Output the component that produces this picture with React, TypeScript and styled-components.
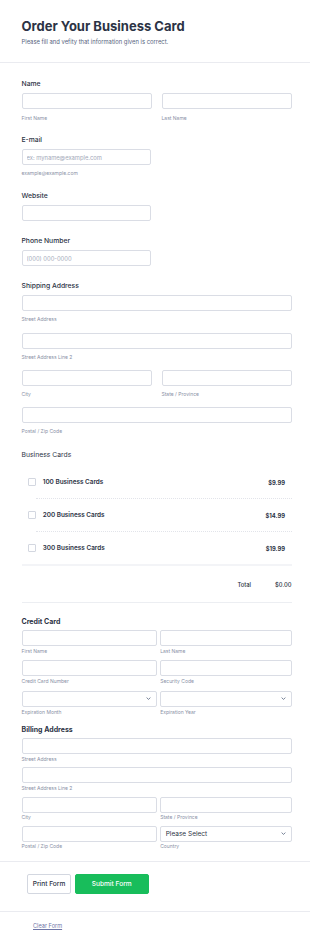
import React from 'react';
import styled, { createGlobalStyle } from 'styled-components';

const GlobalStyle = createGlobalStyle`
  html, body { margin: 0; padding: 0; background: #fff; }
  body { font-family: Inter, "Noto Sans", sans-serif; color: #2c3345; }
  * { box-sizing: border-box; }
`;

const Header = styled.header`
  padding: 17.5px 20px 16.5px 21.5px;
  border-bottom: 1px solid #eaebf0;
`;

const Title = styled.h1`
  margin: 0;
  font-size: 13px;
  line-height: 16px;
  font-weight: 700;
  color: #2c3345;
`;

const Subtitle = styled.p`
  margin: 4px 0 0;
  font-size: 5.85px;
  line-height: 8px;
  color: #57647e;
`;

const Body = styled.main`
  padding: 0 18.5px 0 21.5px;
`;

const Field = styled.section<{ $mt: number }>`
  margin-top: ${p => p.$mt}px;
`;

const Label = styled.div<{ $strong?: boolean; $light?: boolean }>`
  font-size: ${p => (p.$strong ? 7 : 6.8)}px;
  line-height: 9px;
  font-weight: ${p => (p.$strong ? 700 : p.$light ? 400 : 500)};
  color: #2c3345;
`;

const Grid = styled.div<{ $cols: string; $gap: number; $rowGap?: number; $mt: number }>`
  display: grid;
  grid-template-columns: ${p => p.$cols};
  column-gap: ${p => p.$gap}px;
  row-gap: ${p => p.$rowGap ?? 0}px;
  margin-top: ${p => p.$mt}px;
`;

const Input = styled.input`
  display: block;
  width: 100%;
  height: 16px;
  margin: 0;
  padding: 0 4px;
  border: 1px solid #dadde5;
  border-radius: 2px;
  background: #fff;
  font-family: inherit;
  font-size: 5.8px;
  color: #2c3345;
  outline: none;
  &::placeholder { color: #a3a9b9; }
`;

const SelectBox = styled.div`
  display: flex;
  align-items: center;
  justify-content: space-between;
  height: 16px;
  padding: 0 5px 0 4.5px;
  border: 1px solid #dadde5;
  border-radius: 2px;
  font-size: 6.5px;
  color: #2c3345;
`;

const Sub = styled.div<{ $mt: number }>`
  margin-top: ${p => p.$mt}px;
  font-size: 5px;
  line-height: 7px;
  color: #8a91a6;
  white-space: nowrap;
`;

const ProductList = styled.div`
  margin-top: 7.5px;
  border-bottom: 2px solid #f3f4f7;
`;

const ProductRow = styled.div`
  display: flex;
  align-items: center;
  height: 32px;
  padding: 0 6.5px;
`;

const Dots = styled.div`
  margin-left: 14px;
  border-top: 1px dotted #e2e4ea;
`;

const Check = styled.span`
  width: 8px;
  height: 8px;
  border: 1px solid #d3d7e0;
  border-radius: 1px;
  margin-right: 6.7px;
  flex: none;
`;

const ProductName = styled.span`
  flex: 1;
  font-size: 6.4px;
  font-weight: 600;
  color: #2c3345;
`;

const Price = styled.span`
  font-size: 5.8px;
  font-weight: 700;
  color: #2c3345;
`;

const TotalRow = styled.div`
  display: flex;
  align-items: center;
  justify-content: flex-end;
  height: 37px;
  border-bottom: 1px solid #eceef2;
  font-size: 5.8px;
  font-weight: 500;
  color: #2c3345;
  span:first-child { margin-right: 24px; }
`;

const Divider = styled.div<{ $mt: number }>`
  margin-top: ${p => p.$mt}px;
  border-top: 1px solid #eaebf0;
`;

const ButtonBar = styled.div`
  display: flex;
  gap: 4px;
  padding: 12.5px 0 16.5px 27.3px;
`;

const Button = styled.button<{ $primary?: boolean }>`
  height: 19.7px;
  padding: 0;
  width: ${p => (p.$primary ? 74 : 43.4)}px;
  border: 1px solid ${p => (p.$primary ? '#18bd5b' : '#d3d7e0')};
  border-radius: 2px;
  background: ${p => (p.$primary ? '#18bd5b' : '#fff')};
  color: ${p => (p.$primary ? '#fff' : '#2c3345')};
  font-family: inherit;
  font-size: 6.6px;
  font-weight: 500;
`;

const ClearLink = styled.a`
  display: inline-block;
  margin: 5px 0 0 33px;
  font-size: 5.6px;
  line-height: 8px;
  color: #6f76a7;
  text-decoration: underline;
`;

const Chevron = () => (
  <svg width="5" height="3" viewBox="0 0 5 3" fill="none">
    <path d="M0.6 0.6 L2.5 2.4 L4.4 0.6" stroke="#57647e" strokeWidth="0.8" />
  </svg>
);

function Cell(props: { sub: string; subMt: number; select?: string | boolean }) {
  const { sub, subMt, select } = props;
  return (
    <div>
      {select !== undefined
        ? <SelectBox><span>{typeof select === 'string' ? select : ''}</span><Chevron /></SelectBox>
        : <Input />}
      <Sub $mt={subMt}>{sub}</Sub>
    </div>
  );
}

const products = [
  { name: '100 Business Cards', price: '$9.99' },
  { name: '200 Business Cards', price: '$14.99' },
  { name: '300 Business Cards', price: '$19.99' },
];

export default function App() {
  return (
    <>
      <GlobalStyle />
      <Header>
        <Title>Order Your Business Card</Title>
        <Subtitle>Please fill and vefity that information given is correct.</Subtitle>
      </Header>
      <Body>
        <Field $mt={16}>
          <Label>Name</Label>
          <Grid $cols="130px 130px" $gap={10} $mt={5}>
            <Cell sub="First Name" subMt={5.5} />
            <Cell sub="Last Name" subMt={5.5} />
          </Grid>
        </Field>

        <Field $mt={13.5}>
          <Label>E-mail</Label>
          <Grid $cols="129.5px" $gap={0} $mt={5}>
            <div>
              <Input placeholder="ex: myname@example.com" />
              <Sub $mt={5}>example@example.com</Sub>
            </div>
          </Grid>
        </Field>

        <Field $mt={14}>
          <Label>Website</Label>
          <Grid $cols="129.5px" $gap={0} $mt={5}>
            <Input />
          </Grid>
        </Field>

        <Field $mt={15.3}>
          <Label>Phone Number</Label>
          <Grid $cols="129.5px" $gap={0} $mt={5}>
            <Input placeholder="(000) 000-0000" />
          </Grid>
        </Field>

        <Field $mt={15}>
          <Label>Shipping Address</Label>
          <Grid $cols="1fr" $gap={0} $rowGap={9.4} $mt={5}>
            <Cell sub="Street Address" subMt={5} />
            <Cell sub="Street Address Line 2" subMt={5} />
          </Grid>
          <Grid $cols="130px 130px" $gap={10} $mt={9.4}>
            <Cell sub="City" subMt={5} />
            <Cell sub="State / Province" subMt={5} />
          </Grid>
          <Grid $cols="1fr" $gap={0} $mt={9.4}>
            <Cell sub="Postal / Zip Code" subMt={5} />
          </Grid>
        </Field>

        <Field $mt={14.3}>
          <Label $light>Business Cards</Label>
          <ProductList>
            {products.map((p, i) => (
              <React.Fragment key={p.name}>
                {i > 0 && <Dots />}
                <ProductRow>
                  <Check />
                  <ProductName>{p.name}</ProductName>
                  <Price>{p.price}</Price>
                </ProductRow>
              </React.Fragment>
            ))}
          </ProductList>
          <TotalRow>
            <span>Total</span>
            <span>$0.00</span>
          </TotalRow>
        </Field>

        <Field $mt={13.5}>
          <Label $strong>Credit Card</Label>
          <Grid $cols="135px 1fr" $gap={3.7} $rowGap={5.7} $mt={4.3}>
            <Cell sub="First Name" subMt={1.7} />
            <Cell sub="Last Name" subMt={1.7} />
            <Cell sub="Credit Card Number" subMt={1.7} />
            <Cell sub="Security Code" subMt={1.7} />
            <Cell sub="Expiration Month" subMt={1.7} select />
            <Cell sub="Expiration Year" subMt={1.7} select />
          </Grid>
        </Field>

        <Field $mt={9.5}>
          <Label $strong>Billing Address</Label>
          <Grid $cols="1fr" $gap={0} $rowGap={4.4} $mt={4.4}>
            <Cell sub="Street Address" subMt={1.7} />
            <Cell sub="Street Address Line 2" subMt={1.7} />
          </Grid>
          <Grid $cols="135px 1fr" $gap={3.7} $rowGap={4.4} $mt={4.4}>
            <Cell sub="City" subMt={1.7} />
            <Cell sub="State / Province" subMt={1.7} />
            <Cell sub="Postal / Zip Code" subMt={1.7} />
            <Cell sub="Country" subMt={1.7} select="Please Select" />
          </Grid>
        </Field>
      </Body>

      <Divider $mt={10.5} />
      <ButtonBar>
        <Button>Print Form</Button>
        <Button $primary>Submit Form</Button>
      </ButtonBar>
      <Divider $mt={0} />
      <ClearLink href="#">Clear Form</ClearLink>
    </>
  );
}
